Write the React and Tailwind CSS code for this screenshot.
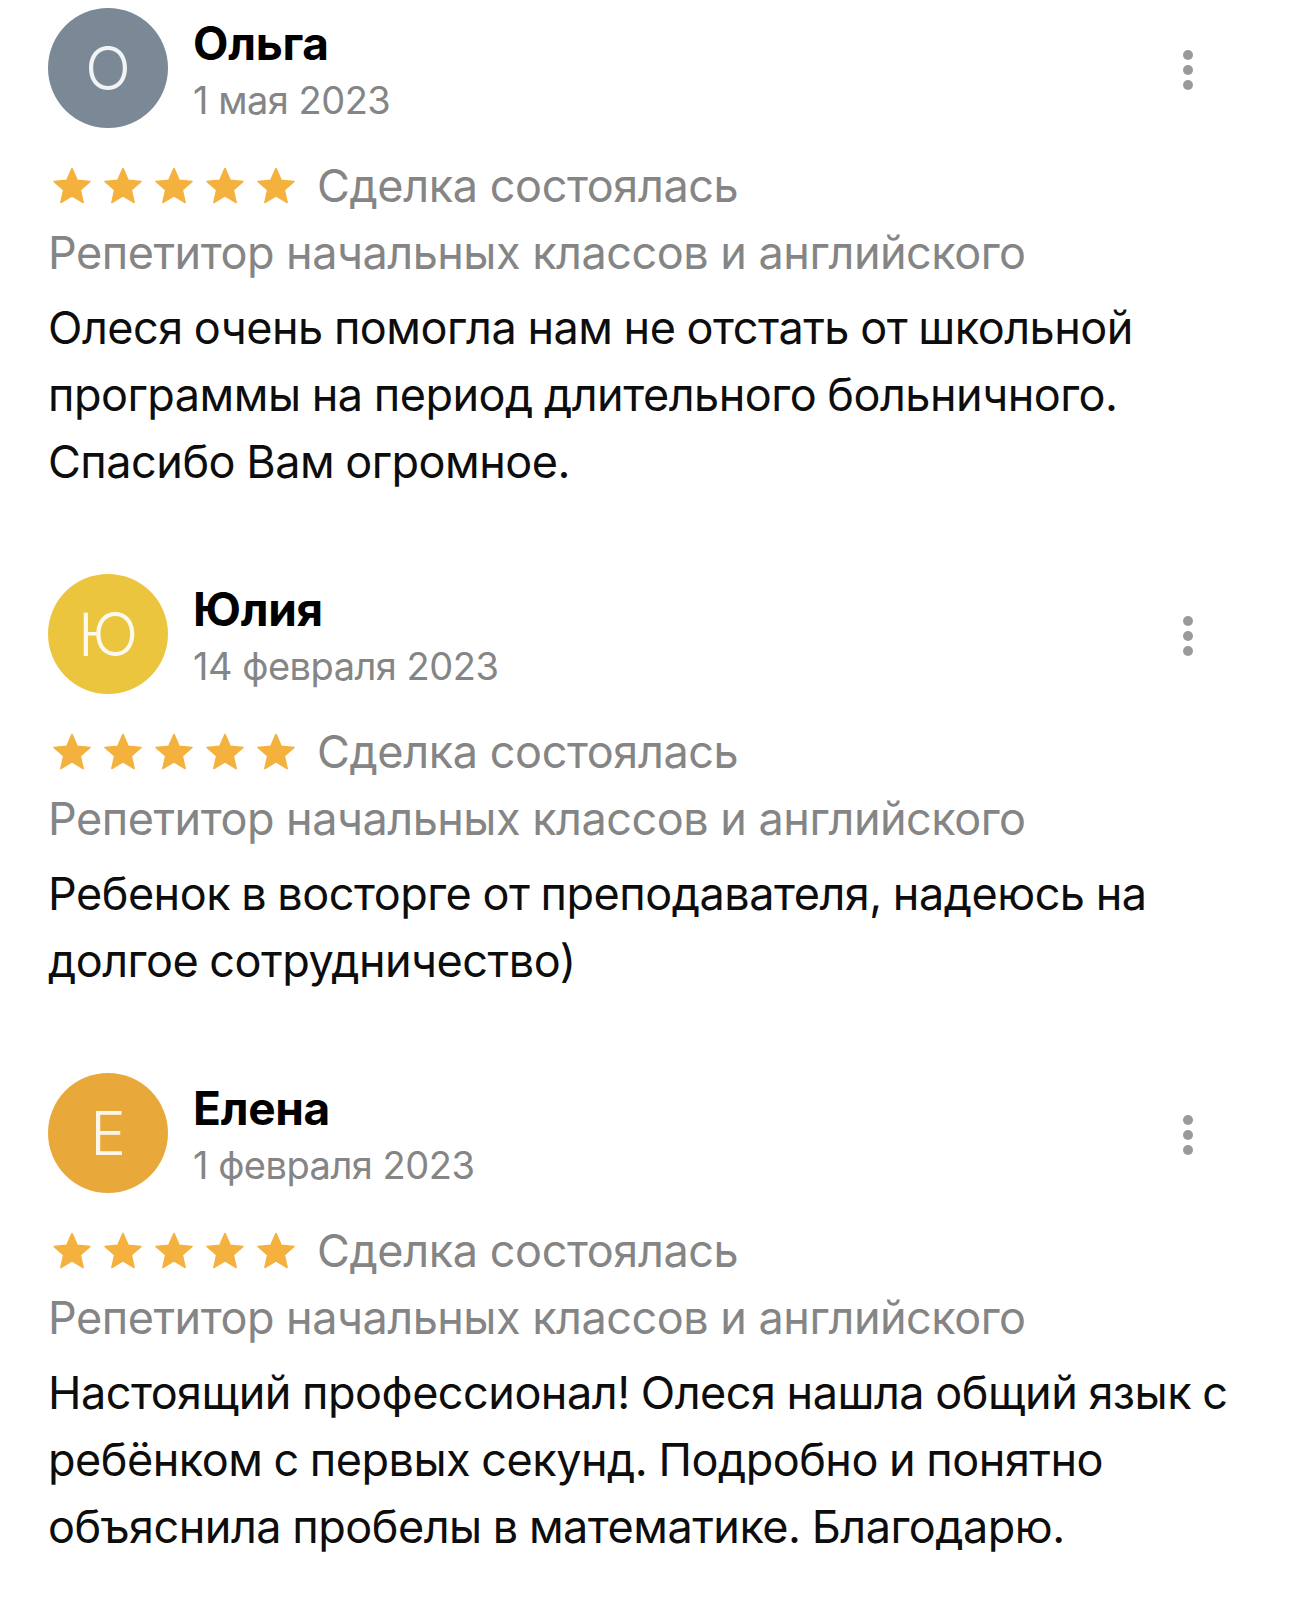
const reviews = [
  {
    name: 'Ольга',
    letter: 'О',
    date: '1 мая 2023',
    color: 'bg-[#7a8995]',
    text: [
      'Олеся очень помогла нам не отстать от школьной',
      'программы на период длительного больничного.',
      'Спасибо Вам огромное.'
    ]
  },
  {
    name: 'Юлия',
    letter: 'Ю',
    date: '14 февраля 2023',
    color: 'bg-[#ecc53f]',
    text: [
      'Ребенок в восторге от преподавателя, надеюсь на',
      'долгое сотрудничество)'
    ]
  },
  {
    name: 'Елена',
    letter: 'Е',
    date: '1 февраля 2023',
    color: 'bg-[#e9a83a]',
    text: [
      'Настоящий профессионал! Олеся нашла общий язык с',
      'ребёнком с первых секунд. Подробно и понятно',
      'объяснила пробелы в математике. Благодарю.'
    ]
  }
]

function Star() {
  return (
    <svg width="46" height="44" viewBox="0 0 24 24" className="shrink-0">
      <path
        fill="#f4b13d"
        stroke="#f4b13d"
        strokeWidth="0.8"
        strokeLinejoin="round"
        d="M12 2.4l2.85 6.45 7 .65-5.3 4.65 1.55 6.9L12 17.45l-6.1 3.6 1.55-6.9L2.15 9.5l7-.65z"
      />
    </svg>
  )
}

function Review({ r }) {
  return (
    <div>
      <div className="flex items-start">
        <div className={`w-[120px] h-[120px] rounded-full ${r.color} flex items-center justify-center text-white/90 text-[60px] font-light shrink-0`}>
          {r.letter}
        </div>
        <div className="ml-[25px] pt-[8px] flex-1">
          <div className="text-[46px] leading-[54px] font-bold text-black tracking-[-0.3px]">{r.name}</div>
          <div className="text-[38px] leading-[60px] text-[#858585] tracking-[-0.5px]">{r.date}</div>
        </div>
        <div className="flex flex-col gap-[5px] mt-[42px] mr-[97px]">
          <span className="w-[10px] h-[10px] rounded-full bg-[#9a9a9a]" />
          <span className="w-[10px] h-[10px] rounded-full bg-[#9a9a9a]" />
          <span className="w-[10px] h-[10px] rounded-full bg-[#9a9a9a]" />
        </div>
      </div>
      <div className="mt-[22px] h-[67px] flex items-center">
        <div className="flex gap-[5px] ml-[1px]">
          <Star /><Star /><Star /><Star /><Star />
        </div>
        <span className="ml-[18px] text-[45px] text-[#858585] tracking-[-0.4px]">Сделка состоялась</span>
      </div>
      <div className="h-[67px] flex items-center text-[45px] text-[#858585] tracking-[-0.5px]">
        Репетитор начальных классов и английского
      </div>
      <div className="mt-[8px] text-[45px] leading-[67px] text-[#0d0d0d] tracking-[-0.5px] [word-spacing:-1px]">
        {r.text.map((line, i) => (
          <div key={i}>{line}</div>
        ))}
      </div>
    </div>
  )
}

export default function App() {
  return (
    <div className="min-h-[1597px] bg-white pl-[48px] pt-[8px] flex flex-col gap-[79px]" style={{ fontFamily: 'Inter, sans-serif' }}>
      {reviews.map((r) => (
        <Review key={r.name} r={r} />
      ))}
    </div>
  )
}
